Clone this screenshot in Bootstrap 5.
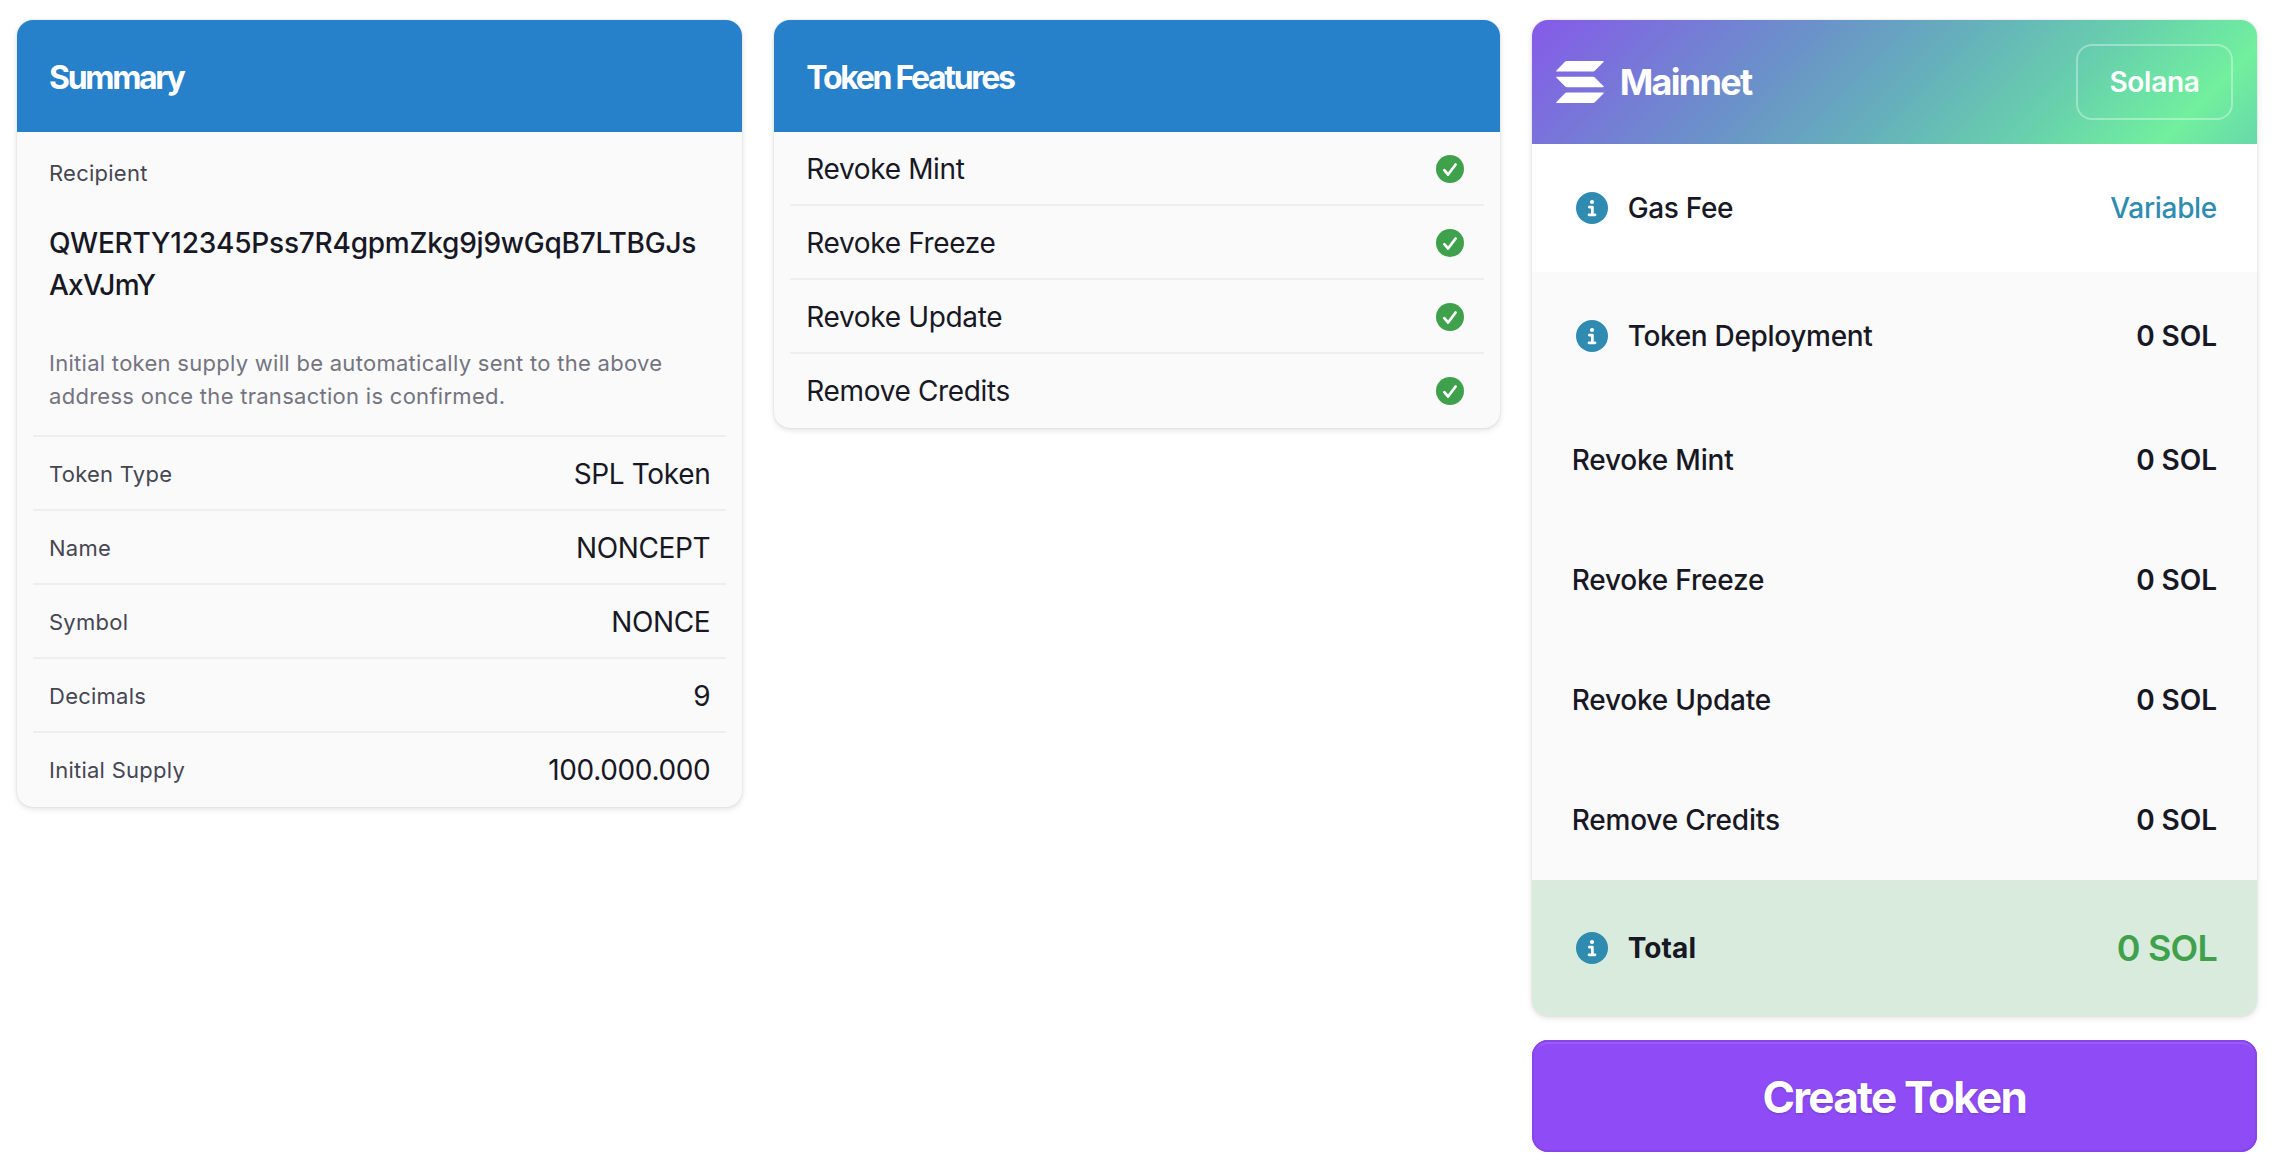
<!DOCTYPE html>
<html lang="en">
<head>
<meta charset="utf-8">
<title>Create Token</title>
<link href="https://cdn.jsdelivr.net/npm/bootstrap@5.3.0/dist/css/bootstrap.min.css" rel="stylesheet">
<style>
body{font-family:Inter,"Liberation Sans",sans-serif;font-size:28px;line-height:42px;color:#181825;background:#fff;letter-spacing:-.35px}
.board{padding:20px 15px 0 17px;display:grid;grid-template-columns:repeat(3,minmax(0,1fr));gap:32px}
.panel{background:#fafafb;border:0;border-radius:16px;overflow:hidden;box-shadow:0 0 2px rgba(0,0,0,.12),0 2px 6px rgba(0,0,0,.12);color:inherit}
.panel-title{height:112px;padding:3px 32px 0;background:#2680ca;color:#fff;font-size:32px;font-weight:700;letter-spacing:-2.3px}
.lines{padding:0 16px}
.line-item{height:74px;padding:2px 16px 0;border-bottom:2px solid #eeeeef}
.line-item:last-child{border-color:transparent}
.features .line-item{padding-right:20px}
.label{font-size:22px;line-height:33px;color:#464653;letter-spacing:.25px}
.recipient{padding:25px 16px 22px;border-bottom:2px solid #eeeeef}
.recipient .label{margin-bottom:32px}
.address{font-weight:500;letter-spacing:-.22px;margin-bottom:41px;height:84px;white-space:nowrap}
.address-end{letter-spacing:-.75px}
.note{font-size:22px;line-height:33px;color:#747480;letter-spacing:.28px;white-space:nowrap}
.network{height:124px;padding:0 24px;color:#fff;background:linear-gradient(135deg,#865ae9 0%,#6a92c9 34%,#65b1bb 53%,#68d1ac 72%,#71f09e 88.5%,#68d8aa 100%)}
.network-name{font-size:36px;font-weight:700;letter-spacing:-1.7px;margin-left:16px}
.chain{width:157px;height:76px;border:2px solid rgba(255,255,255,.35);border-radius:16px;background:transparent;color:#fff;font-size:28px;font-weight:600;padding:0;letter-spacing:-.3px}
.fee{height:120px;padding:0 40px;font-weight:500;letter-spacing:-.2px}
.fee-tall{height:128px;padding-left:44px;letter-spacing:-.32px}
.fee-tall svg,.fee-total svg{margin-right:20px}
.fee-total{height:136px;padding-left:44px;background:#d9ebdd;font-weight:700;letter-spacing:.1px}
.price{font-weight:600;letter-spacing:-.05px}
.teal{color:#2f8cb0}
.sum{font-size:36px;font-weight:600;color:#3fa14b;letter-spacing:-.8px}
.create{height:112px;margin-top:24px;border:0;border-radius:16px;background:#8f4bf6;color:#fff;font-size:44px;font-weight:700;letter-spacing:-1.78px;padding:1px 0 0;text-shadow:0 1px 2px rgba(0,0,0,.2);box-shadow:inset 0 0 0 2px #8846ea,inset 0 4px 0 #9a5cf7,0 2px 6px rgba(0,0,0,.05)}
</style>
<script src="https://cdn.jsdelivr.net/npm/bootstrap@5.3.0/dist/js/bootstrap.bundle.min.js"></script>
</head>
<body>
<svg class="d-none">
  <symbol id="check" viewBox="0 0 28 28"><circle cx="14" cy="14" r="14" fill="#3fa14b"/><path d="M8.3 15.2l3.8 4.3 7.5-10" fill="none" stroke="#fff" stroke-width="2.7" stroke-linecap="round" stroke-linejoin="round"/></symbol>
  <symbol id="info" viewBox="0 0 32 32"><circle cx="16" cy="16" r="16" fill="#2f8cb0"/><circle cx="16" cy="10" r="2.1" fill="#fff"/><path d="M13.3 15.1H16.4V22.8M13 22.8H19" fill="none" stroke="#fff" stroke-width="2.7" stroke-linecap="round" stroke-linejoin="round"/></symbol>
</svg>
<main class="board align-items-start">
  <section class="card panel">
    <div class="panel-title d-flex align-items-center">Summary</div>
    <div class="lines">
      <div class="recipient">
        <div class="label">Recipient</div>
        <div class="address">QWERTY12345Pss7R4gpmZkg9j9wGqB7LTBGJs<br><span class="address-end">AxVJmY</span></div>
        <div class="note">Initial token supply will be automatically sent to the above<br>address once the transaction is confirmed.</div>
      </div>
      <div class="line-item d-flex align-items-center justify-content-between"><span class="label">Token Type</span><span>SPL Token</span></div>
      <div class="line-item d-flex align-items-center justify-content-between"><span class="label">Name</span><span>NONCEPT</span></div>
      <div class="line-item d-flex align-items-center justify-content-between"><span class="label">Symbol</span><span>NONCE</span></div>
      <div class="line-item d-flex align-items-center justify-content-between"><span class="label">Decimals</span><span>9</span></div>
      <div class="line-item d-flex align-items-center justify-content-between"><span class="label">Initial Supply</span><span>100.000.000</span></div>
    </div>
  </section>

  <section class="card panel">
    <div class="panel-title d-flex align-items-center">Token Features</div>
    <div class="lines features">
      <div class="line-item d-flex align-items-center justify-content-between"><span>Revoke Mint</span><svg width="28" height="28"><use href="#check"/></svg></div>
      <div class="line-item d-flex align-items-center justify-content-between"><span>Revoke Freeze</span><svg width="28" height="28"><use href="#check"/></svg></div>
      <div class="line-item d-flex align-items-center justify-content-between"><span>Revoke Update</span><svg width="28" height="28"><use href="#check"/></svg></div>
      <div class="line-item d-flex align-items-center justify-content-between"><span>Remove Credits</span><svg width="28" height="28"><use href="#check"/></svg></div>
    </div>
  </section>

  <section>
    <div class="card panel">
      <div class="network d-flex align-items-center">
        <svg width="48" height="42" viewBox="0 0 48 42" fill="#fff"><path d="M9.2.6Q9.8 0 10.7 0H47q1.4 0 .5 1L38.800 9.800Q38.200 10.500 37.200 10.500H1Q-.4 10.500.5 9.500Z"/><path d="M9.200 25.500Q9.800 26.200 10.800 26.200H47Q48.400 26.200 47.500 25.200L38.800 16.400Q38.200 15.700 37.200 15.700H1Q-.4 15.700.5 16.700Z"/><path d="M9.200 32.100Q9.800 31.500 10.700 31.500H47q1.400 0 .5 1L38.800 41.300Q38.200 42 37.200 42H1Q-.4 42 .5 41Z"/></svg>
        <span class="network-name">Mainnet</span>
        <button class="btn chain ms-auto">Solana</button>
      </div>
      <div class="fee fee-tall bg-white d-flex align-items-center"><svg width="32" height="32"><use href="#info"/></svg><span>Gas Fee</span><span class="ms-auto teal">Variable</span></div>
      <div class="fee fee-tall d-flex align-items-center"><svg width="32" height="32"><use href="#info"/></svg><span>Token Deployment</span><span class="ms-auto price">0 SOL</span></div>
      <div class="fee d-flex align-items-center justify-content-between"><span>Revoke Mint</span><span class="price">0 SOL</span></div>
      <div class="fee d-flex align-items-center justify-content-between"><span>Revoke Freeze</span><span class="price">0 SOL</span></div>
      <div class="fee d-flex align-items-center justify-content-between"><span>Revoke Update</span><span class="price">0 SOL</span></div>
      <div class="fee d-flex align-items-center justify-content-between"><span>Remove Credits</span><span class="price">0 SOL</span></div>
      <div class="fee fee-total d-flex align-items-center"><svg width="32" height="32"><use href="#info"/></svg><span>Total</span><span class="ms-auto sum">0 SOL</span></div>
    </div>
    <button class="btn create w-100">Create Token</button>
  </section>
</main>
</body>
</html>
